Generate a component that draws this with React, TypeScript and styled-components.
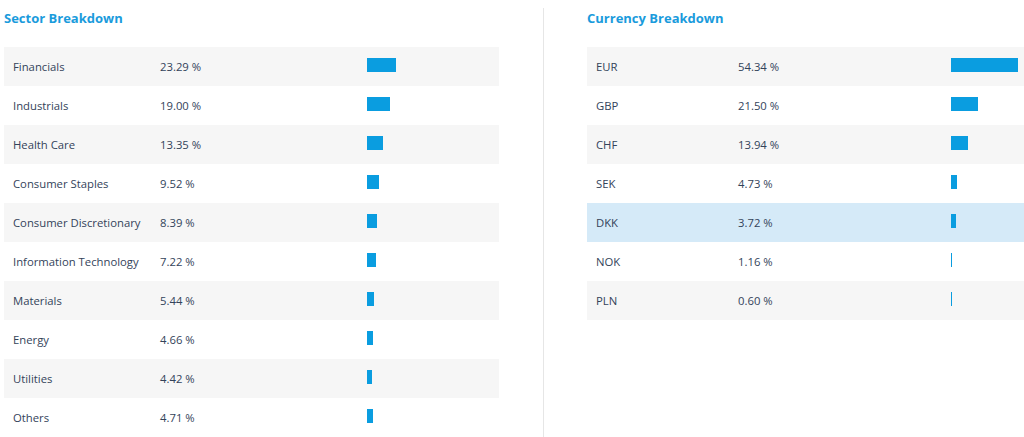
import React from "react";
import styled, { createGlobalStyle } from "styled-components";

const Global = createGlobalStyle`
  html, body { margin: 0; padding: 0; background: #ffffff; }
  body { font-family: "Open Sans", "Liberation Sans", sans-serif; }
`;

const Page = styled.div`
  display: flex;
  align-items: stretch;
  width: 1024px;
  height: 437px;
  padding-left: 4px;
  box-sizing: border-box;
  overflow: hidden;
`;

const Panel = styled.section<{ $width?: number }>`
  display: flex;
  flex-direction: column;
  ${(p) => (p.$width ? `width: ${p.$width}px; flex: none;` : "flex: 1;")}
`;

const Divider = styled.div`
  width: 1px;
  background: #e6e6e6;
  margin: 8px 43px 0 44px;
  flex: none;
`;

const Title = styled.h2`
  margin: 0;
  height: 47px;
  padding-top: 9px;
  box-sizing: border-box;
  font-size: 13px;
  font-weight: 700;
  color: #1a9bdc;
  line-height: 18px;
`;

const Row = styled.div<{ $cols: string; $tone: "white" | "gray" | "hl" }>`
  display: grid;
  grid-template-columns: ${(p) => p.$cols};
  align-items: center;
  height: 39px;
  padding-left: 9px;
  font-size: 11.3px;
  color: #33435a;
  background: ${(p) =>
    p.$tone === "hl" ? "#d5eaf8" : p.$tone === "gray" ? "#f6f6f6" : "#ffffff"};
`;

const Cell = styled.span`
  white-space: nowrap;
  line-height: 16px;
  padding-top: 1px;
`;

const BarCell = styled.div`
  display: flex;
  align-items: center;
  height: 100%;
  padding-bottom: 4px;
  box-sizing: border-box;
`;

const Bar = styled.div`
  height: 14px;
  background: #0a9de0;
`;

type Item = { name: string; pct: number };

const sectors: Item[] = [
  { name: "Financials", pct: 23.29 },
  { name: "Industrials", pct: 19.0 },
  { name: "Health Care", pct: 13.35 },
  { name: "Consumer Staples", pct: 9.52 },
  { name: "Consumer Discretionary", pct: 8.39 },
  { name: "Information Technology", pct: 7.22 },
  { name: "Materials", pct: 5.44 },
  { name: "Energy", pct: 4.66 },
  { name: "Utilities", pct: 4.42 },
  { name: "Others", pct: 4.71 },
];

const currencies: Item[] = [
  { name: "EUR", pct: 54.34 },
  { name: "GBP", pct: 21.5 },
  { name: "CHF", pct: 13.94 },
  { name: "SEK", pct: 4.73 },
  { name: "DKK", pct: 3.72 },
  { name: "NOK", pct: 1.16 },
  { name: "PLN", pct: 0.6 },
];

function Table({
  items,
  cols,
  highlight,
}: {
  items: Item[];
  cols: string;
  highlight?: number;
}) {
  return (
    <div>
      {items.map((it, i) => (
        <Row
          key={it.name}
          $cols={cols}
          $tone={i === highlight ? "hl" : i % 2 === 0 ? "gray" : "white"}
        >
          <Cell>{it.name}</Cell>
          <Cell>{it.pct.toFixed(2)} %</Cell>
          <BarCell>
            <Bar style={{ width: `${Math.max(1, Math.round(it.pct * 1.235))}px` }} />
          </BarCell>
        </Row>
      ))}
    </div>
  );
}

export default function App() {
  return (
    <>
      <Global />
      <Page>
        <Panel $width={495}>
          <Title>Sector Breakdown</Title>
          <Table items={sectors} cols="147px 207px 1fr" />
        </Panel>
        <Divider />
        <Panel>
          <Title>Currency Breakdown</Title>
          <Table items={currencies} cols="142px 213px 1fr" highlight={4} />
        </Panel>
      </Page>
    </>
  );
}
